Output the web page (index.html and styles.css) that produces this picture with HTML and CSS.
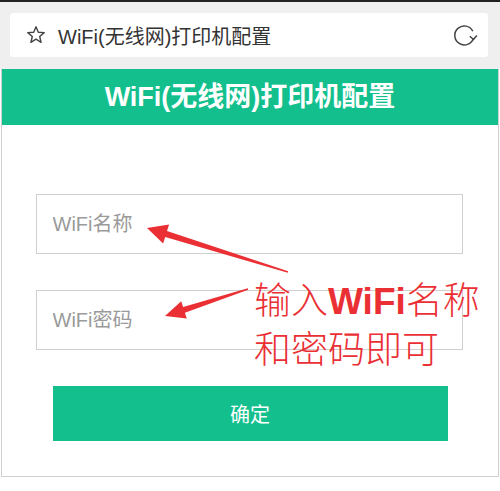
FILE: index.html
```html
<!DOCTYPE html>
<html lang="zh-CN">
<head>
    <meta charset="UTF-8">
    <meta name="viewport" content="width=device-width, initial-scale=1.0">
    <title>WiFi(无线网)打印机配置</title>
    <link rel="stylesheet" href="styles.css">
</head>
<body>
    <div class="page">
        <!-- Browser chrome -->
        <div class="chrome">
            <div class="address-bar">
                <svg class="star" width="20" height="20" viewBox="0 0 20 20">
                    <polygon points="10,1.8 12.3,7.2 18.2,7.6 13.7,11.5 15.1,17.3 10,14.2 4.9,17.3 6.3,11.5 1.8,7.6 7.7,7.2"
                             fill="none" stroke="#444" stroke-width="1.4" stroke-linejoin="round"/>
                </svg>
                <span class="url">WiFi(无线网)打印机配置</span>
                <svg class="reload" width="26" height="24" viewBox="0 0 26 24">
                    <path d="M19.8 8.2 A9.5 9.5 0 1 0 20.4 15.2" fill="none" stroke="#444" stroke-width="1.5"/>
                    <polyline points="16.8,13.2 20.5,16.5 23.8,12.6" fill="none" stroke="#444" stroke-width="1.5"/>
                </svg>
            </div>
        </div>

        <!-- Config card -->
        <div class="card">
            <div class="card-header">WiFi(无线网)打印机配置</div>
            <div class="card-body">
                <input class="field" type="text" placeholder="WiFi名称">
                <input class="field" type="password" placeholder="WiFi密码">
                <button class="submit-btn">确定</button>
            </div>
        </div>

        <!-- Red annotation drawn over the screenshot -->
        <svg class="arrows" width="500" height="491" viewBox="0 0 500 491">
            <polygon fill="#ea3034" points="147,228 169.1,224.5 167,231.1 288.2,271.3 287.8,272.7 165.2,236.9 163.1,243.6"/>
            <polygon fill="#ea3034" points="165,316 181.2,301.2 183.1,306.9 247.8,288.2 248.2,289.8 184.9,312.7 186.8,318.4"/>
        </svg>
        <div class="note">输入<b>WiFi</b>名称<br>和密码即可</div>
    </div>
</body>
</html>
```

FILE: styles.css
```css
body {
    margin: 0;
    background-color: #fff;
    font-family: "Liberation Sans", "Noto Sans CJK SC", sans-serif;
}
.page {
    position: relative;
    width: 500px;
    height: 491px;
    overflow: hidden;
}
.chrome {
    border-top: 2px solid #222;
    background-color: #efefef;
    padding: 11px 12px 12px 10px;
}
.address-bar {
    display: flex;
    align-items: center;
    height: 44px;
    background-color: #fff;
    border-radius: 3px;
    padding: 0 9px 0 16px;
}
.star {
    flex: none;
}
.url {
    flex: 1;
    margin-left: 12px;
    font-size: 20px;
    color: #333;
}
.reload {
    flex: none;
}
.card {
    margin: 0 1px;
    border: 1px solid #cfcfcf;
    border-top: none;
    height: 407px;
}
.card-header {
    background-color: #13c08d;
    color: #fff;
    font-size: 27px;
    font-weight: bold;
    text-align: center;
    height: 56px;
    line-height: 56px;
}
.card-body {
    display: flex;
    flex-direction: column;
    align-items: center;
    padding-top: 69px;
}
.field {
    box-sizing: border-box;
    width: 427px;
    height: 60px;
    margin: 0 0 36px -2px;
    padding: 0 16px;
    border: 1px solid #cfcfcf;
    border-radius: 0;
    outline: none;
    font-family: "Liberation Sans", "Noto Sans CJK SC", sans-serif;
    font-size: 20px;
    color: #333;
}
.field::placeholder {
    color: #9a9a9a;
}
.submit-btn {
    width: 395px;
    height: 55px;
    border: none;
    background-color: #13c08d;
    color: #fff;
    font-family: "Liberation Sans", "Noto Sans CJK SC", sans-serif;
    font-size: 20px;
    cursor: pointer;
}
.arrows {
    position: absolute;
    top: 0;
    left: 0;
}
.note {
    position: absolute;
    left: 254px;
    top: 277px;
    font-family: "Liberation Sans", "Noto Sans CJK SC", sans-serif;
    font-size: 37px;
    font-weight: 300;
    line-height: 49px;
    color: #ea3034;
}
.note b {
    font-weight: bold;
}
```
